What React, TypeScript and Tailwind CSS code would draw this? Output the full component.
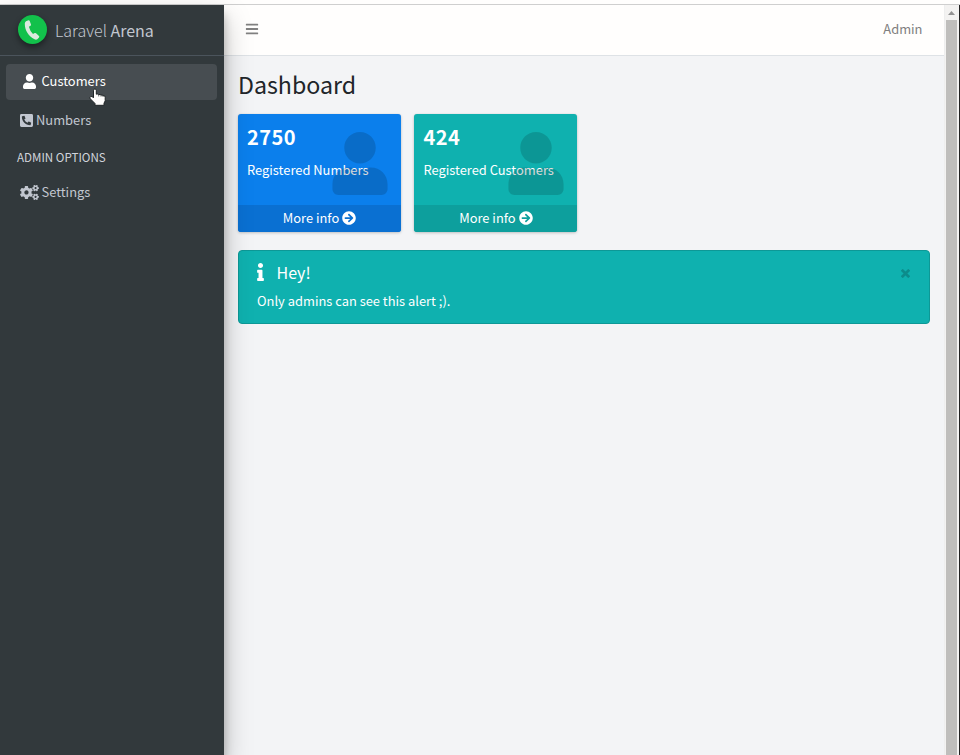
import React from "react";
import { FaUser, FaPhoneSquareAlt, FaCogs, FaArrowCircleRight, FaInfo, FaBars } from "react-icons/fa";

function StatCard({ value, label, tone, foot }: { value: string; label: string; tone: string; foot: string }) {
  return (
    <div className={`relative flex h-[118px] w-[163px] flex-col overflow-hidden rounded-[3px] text-white shadow-[0_0_1px_rgba(0,0,0,.125),0_1px_3px_rgba(0,0,0,.2)] ${tone}`}>
      <div className="flex h-[91px] flex-col px-[9px]">
        <div className="mt-[7px] h-8 text-[20px] leading-8 font-bold tracking-[.45px]">{value}</div>
        <div className="mt-[7px] text-[12.9px] leading-5 whitespace-nowrap">{label}</div>
      </div>
      <div className={`flex h-[27px] items-center justify-center gap-[3px] pb-[2px] ${foot}`}>
        <span className="leading-5">More info</span>
        <FaArrowCircleRight className="size-[14px]" />
      </div>
      <FaUser className="absolute top-[18px] right-[13px] h-[63px] w-[56px] text-black/15" />
    </div>
  );
}

export default function App() {
  return (
    <div className="relative flex h-[755px] w-[960px] flex-col overflow-hidden bg-[#f3f4f6] font-['Noto_Sans_CJK_SC','Source_Sans_Pro',sans-serif] text-[12.9px] text-[#212529]">
      <div className="h-[5px] shrink-0 border-b border-[#cfcfcf] bg-[#fffefd]" />
      <div className="flex min-h-0 flex-1">
        <aside className="relative z-10 w-[224px] shrink-0 bg-[#32393c] text-[#c2c7d0] shadow-[0_13px_26px_rgba(0,0,0,.25),0_9px_9px_rgba(0,0,0,.22)]">
          <div className="flex h-[51px] items-center border-b border-[#4b545c] pl-[18px]">
            <span className="mb-[2px] flex size-[29px] items-center justify-center rounded-full bg-[#12c14b] shadow-[0_3px_6px_rgba(0,0,0,.45)]">
              <svg viewBox="0 0 29 29" className="size-[29px]" fill="#dce9df">
                <path d="M8 6.300L10.500 5.300Q11.300 5.100 11.700 5.900L13 9.400Q13.200 10.200 12.500 10.700L10.900 11.700Q11.800 15.600 15 19L16.700 18.100Q17.400 17.700 18 18.300L21 21Q21.600 21.700 21 22.400L19.300 24.200Q18.200 25.100 16.500 24.300C10.500 21.500 6.700 15.300 6.800 8.600Q6.900 7 8 6.300Z" />
              </svg>
            </span>
            <span className="ml-2 text-[16px] leading-6 font-light">Laravel <b className="font-normal">Arena</b></span>
          </div>
          <nav className="flex flex-col px-[6px] pt-2">
            <div className="flex h-9 w-[211px] items-center rounded-[4px] bg-[#474d51] pb-[2px] pl-[17px] text-white">
              <FaUser className="mr-[5.500px] h-[15px] w-[13px]" />Customers
            </div>
            <div className="mt-[2px] flex h-9 items-center pl-[14px]">
              <FaPhoneSquareAlt className="mr-[3px] h-[15px] w-[13px]" />Numbers
            </div>
            <div className="flex h-[38px] items-center pt-px pl-[11px] text-[11.6px] text-[#d0d4db]">ADMIN OPTIONS</div>
            <div className="flex h-8 items-center pl-[14px]">
              <FaCogs className="mr-[2.500px] h-[15px] w-[19px]" />Settings
            </div>
          </nav>
        </aside>
        <main className="min-w-0 flex-1">
          <header className="flex h-[51px] items-center justify-between border-b border-[#dee2e6] bg-[#fffefd] pr-[21.500px] pb-[2px] pl-[21px] text-[#808080]">
            <FaBars className="size-[14px]" />
            <span>Admin</span>
          </header>
          <div className="px-[14px]">
            <h1 className="pt-[11px] text-[23.2px] leading-[34px]">Dashboard</h1>
            <div className="mt-[13px] flex gap-[13.400px]">
              <StatCard value="2750" label="Registered Numbers" tone="bg-[#0b7fec]" foot="bg-[#0a70d2]" />
              <StatCard value="424" label="Registered Customers" tone="bg-[#0fb1af]" foot="bg-[#0d9f9d]" />
            </div>
            <section className="relative mt-[18px] h-[74px] rounded-[4px] border border-[#0d9896] bg-[#0fb1af] px-[18px] text-white">
              <div className="flex h-[22px] items-center pt-[19px] text-[16px]">
                <FaInfo className="mr-[11.500px] ml-[-1px] h-[18px] w-[9px]" />
                <h2 className="leading-5">Hey!</h2>
              </div>
              <p className="mt-[18px] leading-5">Only admins can see this alert ;).</p>
              <svg className="absolute top-[18px] right-[19px] size-[9px]" viewBox="0 0 9 9" stroke="#0c8c8b" strokeWidth="2.7"><path d="M.8.8l7.400 7.400M8.200.8L.8 8.200" /></svg>
            </section>
          </div>
        </main>
        <div className="flex w-[14px] shrink-0 flex-col items-center border-l border-[#eeeeee] bg-[#f3f2f1]">
          <svg viewBox="0 0 7 4" className="mt-[6px] mb-[5px] h-[4px] w-[7px] shrink-0" fill="#929292"><path d="M0 4L3.500 0L7 4z" /></svg>
          <div className="w-[11px] flex-1 bg-[#bfbebc]" />
        </div>
        <div className="w-[2px] shrink-0 bg-[#f5f4f3]"><div className="ml-px h-full w-px bg-[#222222]" /></div>
      </div>
      <svg viewBox="0 0 17 18" className="absolute top-[88px] left-[89px] z-20 h-[18px] w-[17px]" fill="#fffefd" stroke="#202527" strokeWidth="1" strokeLinejoin="round">
        <path d="M4.500 2.200Q4.500 1 5.900 1T7.300 2.200V6.200Q8.700 5.600 9.700 6.700Q11.200 6 12 7.100Q13.200 6.600 14 7.600Q16.200 7.200 16.200 9.300V12.800L15 15.200V17.300H6V15.500L1.300 10.800Q.3 9.300 1.600 8.700Q3 8 4 9.200L4.500 9.800Z" />
        <path d="M9.700 6.700V8.500M12 7.100V8.700M14 7.600V9" strokeWidth=".6" />
      </svg>
    </div>
  );
}
